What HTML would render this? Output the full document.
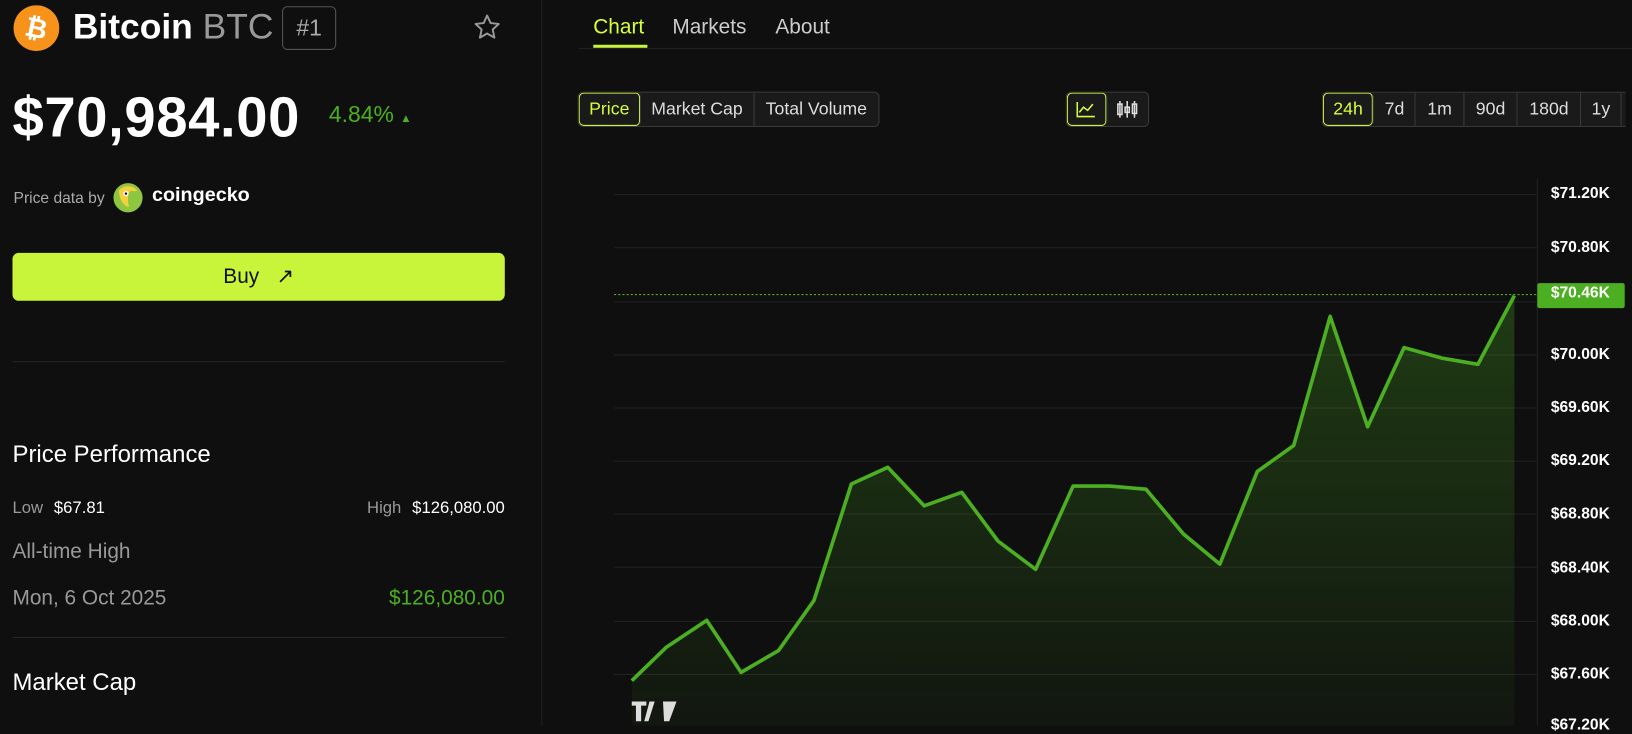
<!DOCTYPE html>
<html><head><meta charset="utf-8"><style>
html,body{margin:0;padding:0;background:#0f0f0f;overflow:hidden;width:1632px;height:725px}
#w{position:absolute;left:0;top:0;width:1568px;height:697px;transform:scale(1.04082);transform-origin:0 0;font-family:"Liberation Sans",sans-serif;color:#fff}
.a{position:absolute;white-space:nowrap}
.grey{color:#9a9a9a}
.btn{position:absolute;border:1px solid #3a3a3a;background:#1a1a1a;border-radius:5px;display:flex;overflow:hidden;height:32px}
.btn div{padding:0 9px;line-height:32px;font-size:17px;color:#ddd;border-right:1px solid #3a3a3a}
.btn div:last-child{border-right:none}
.btn .on{color:#d4ff3a;box-shadow:inset 0 0 0 1px #c8f53a;border-radius:5px}
.yl{position:absolute;left:1490px;font-size:15px;font-weight:bold;color:#fff}
</style></head><body><div id="w">
<svg class="a" style="left:13px;top:5px" width="44" height="44"><circle cx="22" cy="22" r="22" fill="#f7931a"/><text x="22" y="31" text-anchor="middle" font-size="26" font-weight="bold" fill="#fff" font-family="Liberation Sans" transform="rotate(12 22 22)">₿</text></svg>
<div class="a" style="left:70px;top:7px;font-size:34px;font-weight:bold">Bitcoin <span style="font-weight:normal;color:#999">BTC</span></div>
<div class="a" style="left:271px;top:6px;width:50px;height:40px;border:1px solid #555;border-radius:5px;text-align:center;line-height:40px;font-size:22px;color:#aaa">#1</div>
<svg class="a" style="left:453px;top:12px" width="30" height="28" viewBox="0 0 24 24"><path d="M12 2.5l2.9 6.2 6.7.7-5 4.6 1.4 6.7L12 17.3l-5.9 3.4 1.4-6.7-5-4.6 6.7-.7z" fill="none" stroke="#999" stroke-width="1.6" stroke-linejoin="round"/></svg>
<div class="a" style="left:12px;top:82px;font-size:54px;font-weight:bold;letter-spacing:0.6px">$70,984.00</div>
<div class="a" style="left:316px;top:97px;font-size:22px;color:#4caf22">4.84% <span style="font-size:11px">▲</span></div>
<div class="a grey" style="left:13px;top:182px;font-size:15px;color:#aaa">Price data by</div>
<svg class="a" style="left:108px;top:175px" width="30" height="30"><circle cx="15" cy="15" r="14" fill="#8dc63f"/><path d="M6 8a12 12 0 0 1 18 0c-3 1-5 1-6 0-3 2-4 8-2 16-5-1-9-6-10-16z" fill="#f4d03f"/><circle cx="13" cy="11" r="2.5" fill="#fff"/><circle cx="13" cy="11" r="1.2" fill="#111"/></svg>
<div class="a" style="left:146px;top:177px;font-size:19px;font-weight:bold">coingecko</div>
<div class="a" style="left:12px;top:243px;width:473px;height:46px;background:#c8f53a;border-radius:6px;color:#111;font-size:20px;text-align:center;line-height:46px">Buy &nbsp;&nbsp;↗</div>
<div class="a" style="left:12px;top:347px;width:473px;height:1px;background:#262626"></div>
<div class="a" style="left:12px;top:423px;font-size:23px">Price Performance</div>
<div class="a" style="left:12px;top:480px;font-size:16px;color:#999">Low <span style="color:#fff;margin-left:6px">$67.81</span></div>
<div class="a" style="right:1083px;top:480px;font-size:16px;color:#999">High <span style="color:#fff;margin-left:6px">$126,080.00</span></div>
<div class="a" style="left:12px;top:519px;font-size:20px;color:#999">All-time High</div>
<div class="a" style="left:12px;top:564px;font-size:20px;color:#999">Mon, 6 Oct 2025</div>
<div class="a" style="right:1083px;top:564px;font-size:20px;color:#4caf22">$126,080.00</div>
<div class="a" style="left:12px;top:612px;width:473px;height:1px;background:#262626"></div>
<div class="a" style="left:12px;top:642px;font-size:23px">Market Cap</div>
<div class="a" style="left:520px;top:0;width:1px;height:697px;background:#222"></div>
<div class="a" style="left:570px;top:15px;font-size:20px;color:#d4ff3a">Chart</div>
<div class="a" style="left:570px;top:43px;width:52px;height:3px;background:#c8f53a"></div>
<div class="a" style="left:646px;top:15px;font-size:20px;color:#ccc">Markets</div>
<div class="a" style="left:745px;top:15px;font-size:20px;color:#ccc">About</div>
<div class="a" style="left:556px;top:46px;width:1012px;height:1px;background:#222"></div>
<div class="btn" style="left:555px;top:88px"><div class="on" style="padding:0 10px">Price</div><div style="padding:0 10px">Market Cap</div><div style="padding:0 11px">Total Volume</div></div>
<div class="btn" style="left:1024px;top:88px;width:78px"><div class="on" style="width:20px;padding:0 9px"><svg width="18" height="16" style="margin-top:8px"><path d="M1 1v14h17M3 11l4-5 4 3 5-6" fill="none" stroke="#d4ff3a" stroke-width="1.5"/></svg></div><div style="padding:0 8px"><svg width="22" height="18" style="margin-top:7px"><g fill="none" stroke="#ddd" stroke-width="1.5"><rect x="2" y="4" width="4" height="10"/><line x1="4" y1="1" x2="4" y2="17"/><rect x="9" y="7" width="4" height="5"/><line x1="11" y1="1" x2="11" y2="17"/><rect x="16" y="4" width="4" height="9"/><line x1="18" y1="1" x2="18" y2="17"/></g></svg></div></div>
<div class="btn" style="left:1270px;top:88px;border-right:none;border-radius:5px 0 0 5px"><div class="on" style="padding:0 10px">24h</div><div style="padding:0 10px">7d</div><div style="padding:0 11px">1m</div><div style="padding:0 11px">90d</div><div style="padding:0 11px">180d</div><div style="padding:0 10px">1y</div><div style="padding:0 2px"></div></div>
<svg class="a" style="left:0;top:0" width="1568" height="697">
<g stroke="#222" stroke-width="1"><line x1="590" y1="187" x2="1477" y2="187"/><line x1="590" y1="238" x2="1477" y2="238"/><line x1="590" y1="290" x2="1477" y2="290"/><line x1="590" y1="341" x2="1477" y2="341"/><line x1="590" y1="392" x2="1477" y2="392"/><line x1="590" y1="443" x2="1477" y2="443"/><line x1="590" y1="494" x2="1477" y2="494"/><line x1="590" y1="545" x2="1477" y2="545"/><line x1="590" y1="597" x2="1477" y2="597"/><line x1="590" y1="648" x2="1477" y2="648"/><line x1="1477" y1="172" x2="1477" y2="697"/></g>
<defs><linearGradient id="g" x1="0" y1="0" x2="0" y2="1"><stop offset="0" stop-color="#4caf22" stop-opacity=".28"/><stop offset="1" stop-color="#4caf22" stop-opacity=".05"/></linearGradient></defs>
<path d="M607 654L640 622 679 596 712 646 748 625 782 577 818 465 853 449 888 486 924 473 959 520 995 547 1031 467 1066 467 1101 470 1137 513 1172 542 1208 453 1243 428 1278 304 1314 410 1349 334 1385 344 1420 350 1455 284V697H607Z" fill="url(#g)"/>
<path d="M607 654L640 622 679 596 712 646 748 625 782 577 818 465 853 449 888 486 924 473 959 520 995 547 1031 467 1066 467 1101 470 1137 513 1172 542 1208 453 1243 428 1278 304 1314 410 1349 334 1385 344 1420 350 1455 284" fill="none" stroke="#4caf22" stroke-width="3.5" stroke-linejoin="round"/>
<line x1="590" y1="283" x2="1477" y2="283" stroke="#4caf22" stroke-dasharray="2 2"/>
<rect x="1477" y="272" width="84" height="24" rx="2" fill="#4caf22"/>
<path d="M607 674h14v4h-5v15h-5v-15h-4zM624 674h5l-6 19h-4zM637 674h13l-7 19h-5z" fill="#ddd"/>
</svg>
<div class="yl" style="top:177px">$71.20K</div>
<div class="yl" style="top:229px">$70.80K</div>
<div class="yl" style="top:273px">$70.46K</div>
<div class="yl" style="top:332px">$70.00K</div>
<div class="yl" style="top:383px">$69.60K</div>
<div class="yl" style="top:434px">$69.20K</div>
<div class="yl" style="top:485px">$68.80K</div>
<div class="yl" style="top:537px">$68.40K</div>
<div class="yl" style="top:588px">$68.00K</div>
<div class="yl" style="top:639px">$67.60K</div>
<div class="yl" style="top:688px">$67.20K</div>
</div></body></html>
